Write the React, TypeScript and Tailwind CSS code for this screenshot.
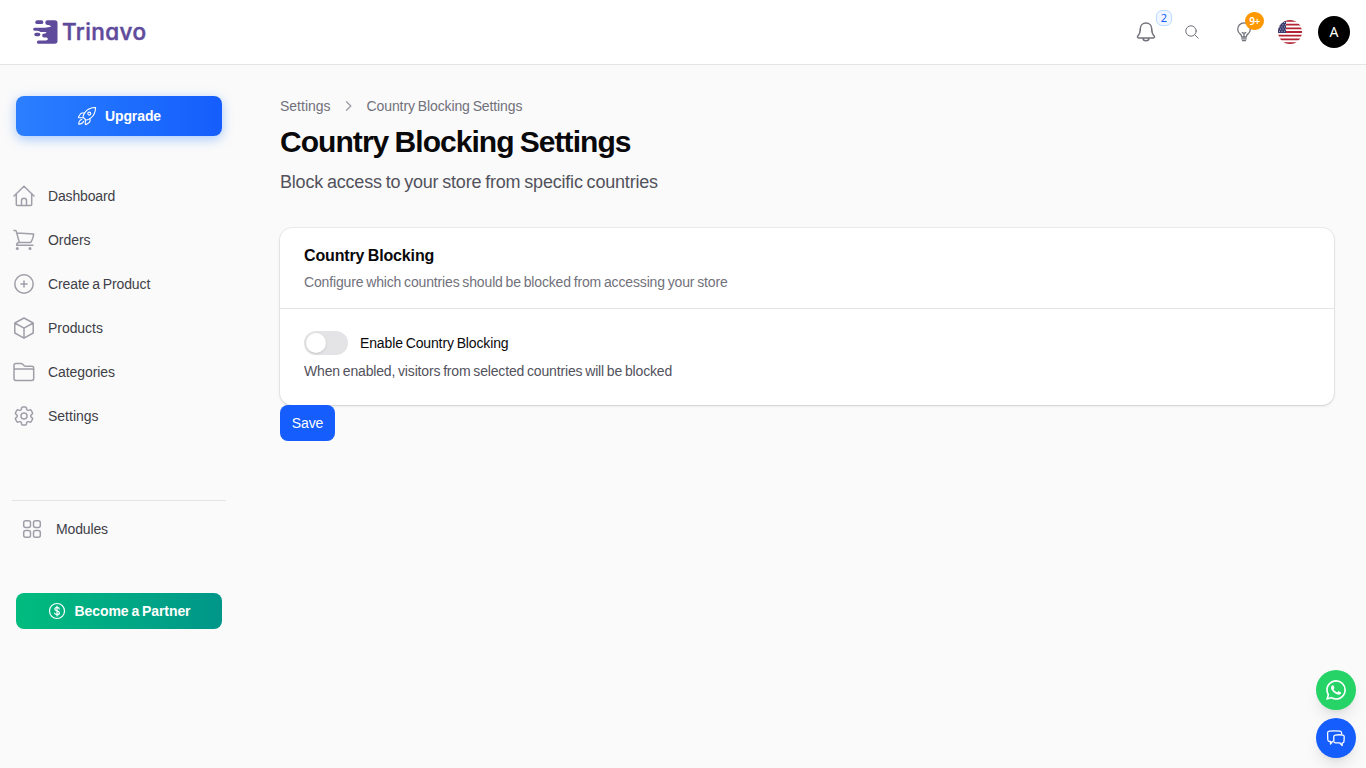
import React from 'react';
import { SiWhatsapp } from 'react-icons/si';

type IconProps = { className?: string };

const HomeIcon: React.FC<IconProps> = ({ className }) => (
  <svg viewBox="0 0 24 24" fill="none" stroke="currentColor" strokeWidth="1.5" strokeLinecap="round" strokeLinejoin="round" className={className}>
    <path d="M2 12 12 2.3 22 12M4.3 10v10.5c0 .6.4 1 1 1h13.4c.6 0 1-.4 1-1V10M9.5 21.500v-4.800a2.500 2.500 0 0 1 5 0v4.800" />
  </svg>
);

const CartIcon: React.FC<IconProps> = ({ className }) => (
  <svg viewBox="0 0 24 24" fill="none" stroke="currentColor" strokeWidth="1.5" strokeLinecap="round" strokeLinejoin="round" className={className}>
    <path d="M2 2.6h1.300c.5 0 .9.3 1 .8L7.300 14.500M5 5l16.700 1c-.3 3-1.200 5.400-2.400 7.600-.3.600-.7.900-1.400.9H7.300c-1.700 0-2.700 1.100-2.700 2.800h16.400" />
    <circle cx="5.300" cy="20.500" r=".8" fill="currentColor" />
    <circle cx="18" cy="20.500" r=".8" fill="currentColor" />
  </svg>
);

const PlusCircleIcon: React.FC<IconProps> = ({ className }) => (
  <svg viewBox="0 0 24 24" fill="none" stroke="currentColor" strokeWidth="1.5" strokeLinecap="round" className={className}>
    <circle cx="12" cy="12" r="9.2" />
    <path d="M12 9v6M9 12h6" />
  </svg>
);

const BoxIcon: React.FC<IconProps> = ({ className }) => (
  <svg viewBox="0 0 24 24" fill="none" stroke="currentColor" strokeWidth="1.5" strokeLinecap="round" strokeLinejoin="round" className={className}>
    <path d="m21.200 7-9.200-5L2.800 7m18.400 0L12 12.200M21.200 7v10L12 22.200M2.800 7l9.200 5.200M2.800 7v10l9.200 5.200m0-10v10" />
  </svg>
);

const FolderIcon: React.FC<IconProps> = ({ className }) => (
  <svg viewBox="0 0 24 24" fill="none" stroke="currentColor" strokeWidth="1.5" strokeLinecap="round" strokeLinejoin="round" className={className}>
    <path d="M2 9.500V5.300c0-1 .8-1.800 1.800-1.800h5.400c.6 0 1.100.3 1.500.7l1.500 1.500c.4.400.9.600 1.500.6h6.200c1 0 1.800.8 1.800 1.800v10.500c0 1-.8 1.800-1.800 1.800H3.800c-1 0-1.800-.8-1.800-1.800V10.500c0-.9.800-1.500 1.800-1.500h16.100c1 0 1.800.5 1.800 1.500" />
  </svg>
);

const GearIcon: React.FC<IconProps> = ({ className }) => (
  <svg viewBox="0 0 24 24" fill="none" stroke="currentColor" strokeWidth="1.5" strokeLinecap="round" strokeLinejoin="round" className={className}>
    <path d="M9.594 3.940c.090-.542.560-.940 1.110-.940h2.593c.550 0 1.020.398 1.110.940l.213 1.281c.063.374.313.686.645.870.074.040.147.083.220.127.325.196.720.257 1.075.124l1.217-.456a1.125 1.125 0 0 1 1.370.490l1.296 2.247a1.125 1.125 0 0 1-.260 1.431l-1.003.827c-.293.241-.438.613-.430.992a7.723 7.723 0 0 1 0 .255c-.008.378.137.750.430.991l1.004.827c.424.350.534.955.260 1.430l-1.298 2.247a1.125 1.125 0 0 1-1.369.491l-1.217-.456c-.355-.133-.750-.072-1.076.124a6.470 6.470 0 0 1-.220.128c-.331.183-.581.495-.644.869l-.213 1.281c-.090.543-.560.940-1.110.940h-2.594c-.550 0-1.019-.398-1.110-.940l-.213-1.281c-.062-.374-.312-.686-.644-.870a6.520 6.520 0 0 1-.220-.127c-.325-.196-.720-.257-1.076-.124l-1.217.456a1.125 1.125 0 0 1-1.369-.490l-1.297-2.247a1.125 1.125 0 0 1 .260-1.431l1.004-.827c.292-.240.437-.613.430-.991a6.932 6.932 0 0 1 0-.255c.007-.380-.138-.751-.430-.992l-1.004-.827a1.125 1.125 0 0 1-.260-1.430l1.297-2.247a1.125 1.125 0 0 1 1.370-.491l1.216.456c.356.133.751.072 1.076-.124.072-.044.146-.086.220-.128.332-.183.582-.495.644-.869l.214-1.280Z" />
    <path d="M15 12a3 3 0 1 1-6 0 3 3 0 0 1 6 0Z" />
  </svg>
);

const ModulesIcon: React.FC<IconProps> = ({ className }) => (
  <svg viewBox="0 0 24 24" fill="none" stroke="currentColor" strokeWidth="1.5" className={className}>
    <rect x="3.700" y="3.700" width="6.800" height="6.800" rx="2" />
    <rect x="13.500" y="3.700" width="6.800" height="6.800" rx="2" />
    <rect x="3.700" y="13.500" width="6.800" height="6.800" rx="2" />
    <rect x="13.500" y="13.500" width="6.800" height="6.800" rx="2" />
  </svg>
);

const RocketIcon: React.FC<IconProps> = ({ className }) => (
  <svg viewBox="0 0 20 20" fill="none" stroke="currentColor" strokeWidth="1.100" strokeLinecap="round" strokeLinejoin="round" className={className}>
    <path d="M18.600 1.500c-5 .1-8.200 1.600-10.400 4.600-1 1.300-1.700 2.600-2.100 4.200-.1.500 0 .9.300 1.200l2.200 2.200c.3.300.7.400 1.200.3 1.600-.4 3-1.100 4.200-2.100 3-2.300 4.400-5.600 4.600-10.400Z" />
    <circle cx="12.300" cy="7.600" r="1.500" />
    <path d="M7.600 7H5.200c-.7 0-1.200.3-1.600.8l-2 3c-.3.500-.1.900.5.900h4.200M13 12.600v2.400c0 .6-.3 1.100-.8 1.500l-3 2c-.5.3-.9.100-.9-.500v-4.200M4.800 13.500c-1.900.4-2.900 1.600-3.100 4.700 3.100-.1 4.500-1.200 4.900-3" />
  </svg>
);

const BellIcon: React.FC<IconProps> = ({ className }) => (
  <svg viewBox="0 0 24 24" fill="none" stroke="currentColor" strokeWidth="1.500" strokeLinecap="round" strokeLinejoin="round" className={className}>
    <path d="M12 3.100c-3.400 0-5.700 2.400-5.700 5.700 0 4-.7 5.400-2.300 6.900-.9.900-.6 2.200.7 2.200h14.600c1.300 0 1.600-1.300.7-2.200-1.600-1.500-2.300-2.900-2.300-6.900 0-3.300-2.300-5.700-5.700-5.700ZM9 18c0 1.800 1.200 2.800 3 2.800s3-1 3-2.800" />
  </svg>
);

const BulbIcon: React.FC<IconProps> = ({ className }) => (
  <svg viewBox="0 0 24 24" fill="none" stroke="currentColor" strokeWidth="1.300" strokeLinecap="round" strokeLinejoin="round" className={className}>
    <path d="M9.700 17c0-1.300-.6-2.100-1.500-2.900A6.300 6.300 0 0 1 5.700 9.200a6.300 6.300 0 0 1 12.600 0c0 2-.9 3.800-2.500 4.900-.9.800-1.500 1.600-1.500 2.900Z" />
    <path d="M12 16.800v-3.400m-1.800-.7 1.800.7 1.800-.7M9.700 18.900h4.600M10.500 20.700h3" />
  </svg>
);

const ChatIcon: React.FC<IconProps> = ({ className }) => (
  <svg viewBox="0 0 20 20" fill="none" stroke="currentColor" strokeWidth="1.300" strokeLinejoin="round" className={className}>
    <path d="M7 13.500H6.400L4.500 16v-2.500h-.8c-1.100 0-1.800-.7-1.900-1.800l-.2-6.600c0-1.100.7-1.800 1.700-1.900 3.700-.4 7-.4 10.700 0 1 .1 1.600.8 1.600 1.800v1.500" />
    <path d="M9.300 7.200c2.500-.6 5.100-.6 7.600 0 .8.200 1.300.7 1.300 1.500l-.2 4.600c0 .9-.5 1.500-1.300 1.500h-.5v2.700l-2.600-2.700H9.200c-.9 0-1.400-.6-1.400-1.500V8.700c0-.8.600-1.300 1.500-1.500Z" />
  </svg>
);

const Logo: React.FC = () => (
  <div className="flex items-center text-[#5f4b9b]">
    <svg viewBox="0 0 26 26" fill="currentColor" className="size-[26px]">
      <path d="M15.700 1.200h7c2 0 2.800 1 2.800 2.800v18c0 1.800-.8 2.800-2.800 2.800H6.700a1.700 1.700 0 0 1-.2-3.400h7.300c2.700 0 2.700-2.900 0-2.900h-1.600a2 2 0 0 1 0-4.100h.6c2 0 2.100-1.400.3-1.400H8.900c-1.500 0-1.700-1.200-3.400-1.200H2.700a1.500 1.500 0 0 1-.1-3h8.100c3.200 0 4.500-.4 7-.7 1.400-.2 1.400-1.400 0-1.700-.8-.2-1.300-.4-2.100-.4a2.400 2.400 0 0 1 .1-4.800Z" />
      <rect x="3.300" y="1.300" width="8" height="3.800" rx="1.900" />
      <rect x="2.300" y="13.800" width="6" height="3.500" rx="1.750" />
    </svg>
    <span className="ml-1 pt-[2px] font-['Inter'] text-[22.5px] leading-none font-medium tracking-[0.4px] [-webkit-text-stroke:0.5px_#5f4b9b] [font-feature-settings:'cv11']">
      Trinavo
    </span>
  </div>
);

const UsFlag: React.FC = () => (
  <svg viewBox="0 0 24 24" className="size-6">
    <clipPath id="flag">
      <circle cx="12" cy="12" r="12" />
    </clipPath>
    <g clipPath="url(#flag)">
      <path fill="#fff" d="M0 0h24v24H0z" />
      <path
        fill="#b22234"
        d="M0 0h24v1.850H0zM0 3.690h24v1.850H0zM0 7.380h24v1.850H0zM0 11.080h24v1.850H0zM0 14.770h24v1.850H0zM0 18.460h24v1.850H0zM0 22.150h24V24H0z"
      />
      <path fill="#3c3b6e" d="M0 0h8v12.900H0z" />
      <path stroke="#fff" strokeWidth=".7" strokeDasharray=".9 1.600" d="M1 2.500h7M2 4.700h6M1 6.900h7M2 9.100h6M1 11.300h7" />
    </g>
  </svg>
);

const navItems = [
  { label: 'Dashboard', icon: HomeIcon, tracking: 'tracking-[-0.15px]' },
  { label: 'Orders', icon: CartIcon, tracking: 'tracking-[-0.05px]' },
  { label: 'Create a Product', icon: PlusCircleIcon, tracking: 'tracking-[-0.1px]' },
  { label: 'Products', icon: BoxIcon, tracking: 'tracking-[-0.05px]' },
  { label: 'Categories', icon: FolderIcon, tracking: 'tracking-[-0.07px]' },
  { label: 'Settings', icon: GearIcon, tracking: 'tracking-normal' },
];

const Header: React.FC = () => (
  <header className="flex h-[65px] items-center justify-between border-b border-zinc-200 bg-white pr-4 pb-px pl-8">
    <Logo />
    <div className="flex items-center">
      <button className="relative text-zinc-500">
        <BellIcon className="size-6" />
        <span className="absolute -top-[10px] left-[22px] flex h-4 w-4 items-center justify-center rounded-[6px] border border-blue-200 bg-blue-50 font-['Noto_Sans'] text-[11px] leading-none text-blue-600">
          2
        </span>
      </button>
      <button className="ml-[26px] text-zinc-500">
        <svg viewBox="0 0 16 16" fill="none" stroke="currentColor" strokeWidth="1" strokeLinecap="round" className="size-4">
          <circle cx="7" cy="7" r="5.200" />
          <path d="m11 11 3.200 3.200" />
        </svg>
      </button>
      <button className="relative ml-8 text-zinc-500">
        <BulbIcon className="size-6" />
        <span className="absolute -top-2 left-[13px] flex h-[18px] w-[19px] items-center justify-center rounded-full bg-[#ff9800] pt-px font-['Noto_Sans'] text-[10px] leading-none font-semibold tracking-[-0.4px] text-white">
          9+
        </span>
      </button>
      <button className="ml-[22px]">
        <UsFlag />
      </button>
      <button className="ml-4 flex size-8 items-center justify-center rounded-full bg-black font-['Noto_Sans'] text-sm text-white">
        A
      </button>
    </div>
  </header>
);

const Sidebar: React.FC = () => (
  <aside className="w-[238px] shrink-0 pt-[31px]">
    <button className="mx-4 flex h-10 w-[206px] items-center justify-center rounded-lg bg-gradient-to-r from-[#2b7fff] to-[#155dfc] text-white shadow-[0_3px_12px_rgba(43,127,255,0.4)]">
      <RocketIcon className="mr-2 size-5" />
      <span className="text-sm font-bold tracking-[-0.1px]">Upgrade</span>
    </button>

    <nav className="mt-[38px]">
      {navItems.map(({ label, icon: Icon, tracking }) => (
        <a key={label} href="#" className="flex h-11 items-center pl-3 text-sm text-zinc-700">
          <Icon className="mr-3 size-6 text-zinc-400" />
          <span className={`${tracking} [word-spacing:-1px]`}>{label}</span>
        </a>
      ))}
    </nav>

    <div className="mt-[62px] ml-3 w-[214px] border-t border-zinc-200 pt-[6px]">
      <a href="#" className="flex h-11 items-center pl-2 text-sm text-zinc-700">
        <ModulesIcon className="mr-3 size-6 text-zinc-400" />
        <span className="tracking-[-0.15px]">Modules</span>
      </a>
    </div>

    <button className="mx-4 mt-[42px] flex h-9 w-[206px] items-center justify-center rounded-lg bg-gradient-to-r from-[#00bc7d] to-[#009689] text-white">
      <svg viewBox="0 0 18 18" fill="none" stroke="currentColor" strokeWidth="1.200" strokeLinecap="round" className="mr-[9px] size-[18px]">
        <circle cx="9" cy="9" r="7.500" />
        <path d="M11.300 6.800c-.2-.9-1-1.400-2.300-1.400-1.300 0-2.200.7-2.200 1.700 0 2.500 4.600 1.200 4.600 3.800 0 1-.9 1.700-2.400 1.700-1.400 0-2.300-.6-2.500-1.600M9 4v10" />
      </svg>
      <span className="text-sm font-bold tracking-[-0.1px] [word-spacing:-0.8px]">Become a Partner</span>
    </button>
  </aside>
);

const SettingsPage: React.FC = () => (
  <main className="ml-[42px] w-[1054px] pt-[31px] [word-spacing:-0.9px]">
    {/* Breadcrumb */}
    <div className="flex h-5 items-center text-sm text-zinc-500">
      <span>Settings</span>
      <svg viewBox="0 0 20 20" fill="none" stroke="currentColor" strokeWidth="1.400" strokeLinecap="round" strokeLinejoin="round" className="mx-2 size-5 text-zinc-400">
        <path d="m7.500 5.700 4.300 4.300-4.300 4.300" />
      </svg>
      <span className="tracking-[-0.11px]">Country Blocking Settings</span>
    </div>

    <h1 className="mt-2 text-[30px] leading-9 font-bold tracking-[-0.95px] text-zinc-950 [word-spacing:-1.2px]">
      Country Blocking Settings
    </h1>
    <p className="mt-2 text-lg leading-7 tracking-[-0.2px] text-zinc-600">
      Block access to your store from specific countries
    </p>

    {/* Card */}
    <section className="mt-8 rounded-xl bg-white shadow-sm ring-1 ring-zinc-950/5">
      <div className="h-20 px-6 pt-4">
        <h2 className="text-base leading-6 font-bold tracking-[-0.14px] text-zinc-950">Country Blocking</h2>
        <p className="mt-1 text-sm tracking-[-0.15px] text-zinc-500">
          Configure which countries should be blocked from accessing your store
        </p>
      </div>
      <div className="h-[97px] border-t border-zinc-200 px-6 pt-[22px]">
        <div className="flex items-center">
          <button className="flex h-6 w-11 items-center rounded-full bg-zinc-200 p-0.5">
            <span className="size-5 rounded-full bg-white shadow" />
          </button>
          <span className="ml-3 text-sm tracking-[-0.13px] text-zinc-950">Enable Country Blocking</span>
        </div>
        <p className="mt-[6px] text-sm tracking-[-0.16px] text-zinc-600">
          When enabled, visitors from selected countries will be blocked
        </p>
      </div>
    </section>
    <button className="relative flex h-9 w-[55px] items-center justify-center rounded-lg bg-[#155dfc] text-sm text-white">
      <span className="tracking-[-0.1px]">Save</span>
    </button>
  </main>
);

const App: React.FC = () => (
  <div className="min-h-screen bg-zinc-50 font-['Liberation_Sans',sans-serif]">
    <Header />
    <div className="flex">
      <Sidebar />
      <SettingsPage />
    </div>

    {/* Floating contact buttons */}
    <div className="fixed right-[10px] bottom-[10px] flex flex-col gap-2 text-white">
      <button className="flex size-10 items-center justify-center rounded-full bg-[#25d366] shadow-lg">
        <SiWhatsapp className="size-5" />
      </button>
      <button className="flex size-10 items-center justify-center rounded-full bg-[#155dfc] shadow-lg">
        <ChatIcon className="size-5" />
      </button>
    </div>
  </div>
);

export default App;
